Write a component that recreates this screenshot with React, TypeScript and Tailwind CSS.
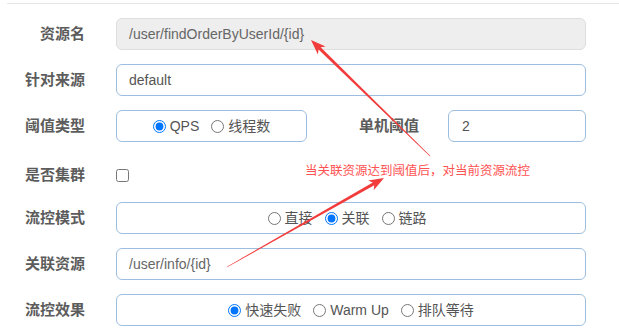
import { FC, ReactNode } from 'react';

const arrowPoints = (x1: number, y1: number, x2: number, y2: number) => {
  const dx = x2 - x1;
  const dy = y2 - y1;
  const len = Math.hypot(dx, dy);
  const ux = dx / len;
  const uy = dy / len;
  const nx = -uy;
  const ny = ux;
  const head = 15;
  const bx = x2 - ux * head;
  const by = y2 - uy * head;
  const sx = x2 - ux * (head - 3);
  const sy = y2 - uy * (head - 3);
  const p = (x: number, y: number) => `${x.toFixed(1)},${y.toFixed(1)}`;
  return [
    p(x1 + nx * 0.3, y1 + ny * 0.3),
    p(sx + nx * 1.6, sy + ny * 1.6),
    p(bx + nx * 5.5, by + ny * 5.5),
    p(x2, y2),
    p(bx - nx * 5.5, by - ny * 5.5),
    p(sx - nx * 1.6, sy - ny * 1.6),
    p(x1 - nx * 0.3, y1 - ny * 0.3),
  ].join(' ');
};

const Label: FC<{ children: ReactNode }> = ({ children }) => (
  <div className="w-[85px] shrink-0 text-right text-[15px] font-bold text-[#5c5c5c]">{children}</div>
);

const Radio: FC<{ label: string; name: string; checked?: boolean }> = ({ label, name, checked }) => (
  <label className="flex items-center gap-[4px] text-[14px] text-[#555]">
    <input type="radio" name={name} defaultChecked={checked} className="m-0 h-[13px] w-[13px]" />
    {label}
  </label>
);

const boxCls = 'flex h-8 items-center rounded-[6px] border border-[#9dbde0] bg-white';

const App: FC = () => {
  return (
    <div className="relative h-[336px] w-[619px] overflow-hidden bg-white font-['Liberation_Sans','Noto_Sans_CJK_SC',sans-serif]">
      <div className="pt-[3px]">
        <div className="ml-[7px] h-px bg-[#e6e6e6]" />
      </div>

      <div className="mt-[14px] flex flex-col gap-[14px]">
        <div className="flex items-center">
          <Label>资源名</Label>
          <div className="ml-[31px] flex h-8 w-[470px] items-center rounded-[6px] border border-[#dedede] bg-[#eeeeee] pl-3 text-[14px] text-[#666]">
            /user/findOrderByUserId/{'{id}'}
          </div>
        </div>

        <div className="flex items-center">
          <Label>针对来源</Label>
          <div className={`${boxCls} ml-[31px] w-[470px] pl-3 text-[14px] text-[#555]`}>default</div>
        </div>

        <div className="flex items-center">
          <Label>阈值类型</Label>
          <div className={`${boxCls} ml-[31px] w-[191px] justify-center gap-3`}>
            <Radio name="grade" label="QPS" checked />
            <Radio name="grade" label="线程数" />
          </div>
          <div className="w-[112px] text-right text-[15px] font-bold text-[#5c5c5c]">单机阈值</div>
          <div className={`${boxCls} ml-[29px] w-[138px] pl-[13px] text-[14px] text-[#555]`}>2</div>
        </div>

        <div className="flex h-8 items-center pt-[6px]">
          <Label>是否集群</Label>
          <input type="checkbox" className="m-0 ml-[31px] h-[13px] w-[13px]" />
          <div className="mb-[8px] ml-[176px] text-[12.5px] text-[#ff5252]">当关联资源达到阈值后，对当前资源流控</div>
        </div>

        <div className="flex items-center">
          <Label>流控模式</Label>
          <div className={`${boxCls} ml-[31px] w-[470px] justify-center gap-3 pr-2`}>
            <Radio name="strategy" label="直接" />
            <Radio name="strategy" label="关联" checked />
            <Radio name="strategy" label="链路" />
          </div>
        </div>

        <div className="flex items-center">
          <Label>关联资源</Label>
          <div className={`${boxCls} ml-[31px] w-[470px] pl-3 text-[14px] text-[#666]`}>/user/info/{'{id}'}</div>
        </div>

        <div className="flex items-center">
          <Label>流控效果</Label>
          <div className={`${boxCls} ml-[31px] w-[470px] justify-center gap-3`}>
            <Radio name="behavior" label="快速失败" checked />
            <Radio name="behavior" label="Warm Up" />
            <Radio name="behavior" label="排队等待" />
          </div>
        </div>
      </div>

      <svg className="pointer-events-none absolute left-0 top-0" width="619" height="336">
        <polygon points={arrowPoints(430, 156, 311, 40)} fill="#f23c3c" />
        <polygon points={arrowPoints(227, 267, 384, 178)} fill="#f23c3c" />
      </svg>
    </div>
  );
};

export default App;
